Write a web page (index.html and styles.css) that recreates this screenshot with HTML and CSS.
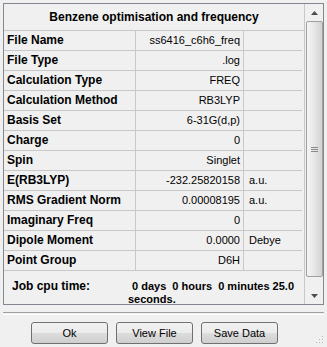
FILE: index.html
```html
<!DOCTYPE html>
<html lang="en">
<head>
  <meta charset="UTF-8">
  <title>Benzene optimisation and frequency</title>
  <link rel="stylesheet" href="styles.css">
</head>
<body>

  <div class="frame">
    <div class="sheet">
      <div class="title">Benzene optimisation and frequency</div>

      <div class="row"><div class="label">File Name</div><div class="value">ss6416_c6h6_freq</div><div class="unit"></div></div>
      <div class="row"><div class="label">File Type</div><div class="value">.log</div><div class="unit"></div></div>
      <div class="row"><div class="label">Calculation Type</div><div class="value">FREQ</div><div class="unit"></div></div>
      <div class="row"><div class="label">Calculation Method</div><div class="value">RB3LYP</div><div class="unit"></div></div>
      <div class="row"><div class="label">Basis Set</div><div class="value">6-31G(d,p)</div><div class="unit"></div></div>
      <div class="row"><div class="label">Charge</div><div class="value">0</div><div class="unit"></div></div>
      <div class="row"><div class="label">Spin</div><div class="value">Singlet</div><div class="unit"></div></div>
      <div class="row"><div class="label">E(RB3LYP)</div><div class="value">-232.25820158</div><div class="unit">a.u.</div></div>
      <div class="row"><div class="label">RMS Gradient Norm</div><div class="value">0.00008195</div><div class="unit">a.u.</div></div>
      <div class="row"><div class="label">Imaginary Freq</div><div class="value">0</div><div class="unit"></div></div>
      <div class="row"><div class="label">Dipole Moment</div><div class="value">0.0000</div><div class="unit">Debye</div></div>
      <div class="row"><div class="label">Point Group</div><div class="value">D6H</div><div class="unit"></div></div>

      <div class="cpu">
        <div class="cpu-label">Job cpu time:</div>
        <div class="cpu-value"><span class="first">0 days&nbsp; 0 hours&nbsp; 0 minutes 25.0</span><br>seconds.</div>
      </div>
    </div>

    <div class="scrollbar">
      <div class="arrow">
        <svg width="7" height="4" viewBox="0 0 7 4"><path d="M0 4 L3.5 0 L7 4 Z" fill="#4d4d4d"/></svg>
      </div>
      <div class="thumb">
        <svg width="7" height="7" viewBox="0 0 7 7">
          <path d="M0 1.5 H7 M0 3.5 H7 M0 5.5 H7" stroke="#8a8a8a" stroke-width="1"/>
        </svg>
      </div>
      <div class="track"></div>
      <div class="arrow">
        <svg width="7" height="4" viewBox="0 0 7 4"><path d="M0 0 L3.5 4 L7 0 Z" fill="#4d4d4d"/></svg>
      </div>
    </div>
  </div>

  <div class="separator"></div>

  <div class="buttons">
    <button class="btn">Ok</button>
    <button class="btn">View File</button>
    <button class="btn">Save Data</button>
  </div>

  <svg class="grip" width="10" height="10" viewBox="0 0 10 10">
    <rect x="8" y="2" width="1" height="1" fill="#b8b8b8"/>
    <rect x="5" y="5" width="1" height="1" fill="#b8b8b8"/>
    <rect x="8" y="5" width="1" height="1" fill="#b8b8b8"/>
    <rect x="2" y="8" width="1" height="1" fill="#b8b8b8"/>
    <rect x="5" y="8" width="1" height="1" fill="#b8b8b8"/>
    <rect x="8" y="8" width="1" height="1" fill="#b8b8b8"/>
  </svg>

</body>
</html>
```

FILE: styles.css
```css
body {
  margin: 0;
  width: 327px;
  height: 347px;
  background-color: #f0f0f0;
  font-family: "Liberation Sans", Arial, sans-serif;
  font-size: 11px;
  color: #000;
  position: relative;
  overflow: hidden;
}

.frame {
  margin: 3px 0 0 3px;
  width: 319px;
  height: 300px;
  border: 1px solid #828790;
  display: flex;
}

.sheet {
  width: 300px;
  border-right: 1px solid #c8c8c8;
}

.title {
  height: 26px;
  line-height: 26px;
  text-align: center;
  font-weight: bold;
  font-size: 12px;
  border-bottom: 1px solid #c8c8c8;
}

.row {
  display: grid;
  grid-template-columns: 132px 108px 58px;
  height: 20px;
}

.row > div {
  height: 19px;
  line-height: 19px;
  border-bottom: 1px solid #c8c8c8;
  white-space: nowrap;
}

.label {
  padding-left: 3px;
  font-weight: bold;
  font-size: 12px;
  border-right: 1px solid #c8c8c8;
}

.value {
  text-align: right;
  padding-right: 3px;
  border-right: 1px solid #c8c8c8;
}

.unit {
  padding-left: 5px;
}

.cpu {
  display: flex;
  font-weight: bold;
  line-height: 13px;
  padding-top: 9px;
}

.cpu-label {
  width: 116px;
  padding-left: 8px;
  font-size: 12px;
}

.cpu-value {
  white-space: nowrap;
  font-size: 11px;
}

.cpu-value .first {
  padding-left: 4px;
}

.scrollbar {
  width: 17px;
  margin-left: 1px;
  display: flex;
  flex-direction: column;
}

.arrow {
  height: 17px;
  display: flex;
  align-items: center;
  justify-content: center;
}

.thumb {
  height: 256px;
  border: 1px solid #a0a0a0;
  border-radius: 2px;
  box-sizing: border-box;
  background: linear-gradient(to right, #f4f4f4, #e6e6e6 50%, #d2d2d2);
  display: flex;
  align-items: center;
  justify-content: center;
}

.track {
  flex: 1;
}

.separator {
  margin: 7px 0 0 3px;
  width: 321px;
  height: 1px;
  border-top: 1px solid #a0a0a0;
  border-bottom: 1px solid #ffffff;
}

.buttons {
  display: flex;
  gap: 8px;
  padding: 7px 0 0 31px;
}

.btn {
  width: 77px;
  height: 22px;
  padding: 0;
  border: 1px solid #707070;
  border-radius: 3px;
  background: linear-gradient(to bottom, #f2f2f2 0%, #ebebeb 49%, #dddddd 50%, #cfcfcf 100%);
  font-family: "Liberation Sans", Arial, sans-serif;
  font-size: 11px;
  color: #000;
}

.grip {
  position: absolute;
  right: 3px;
  bottom: 3px;
}
```
